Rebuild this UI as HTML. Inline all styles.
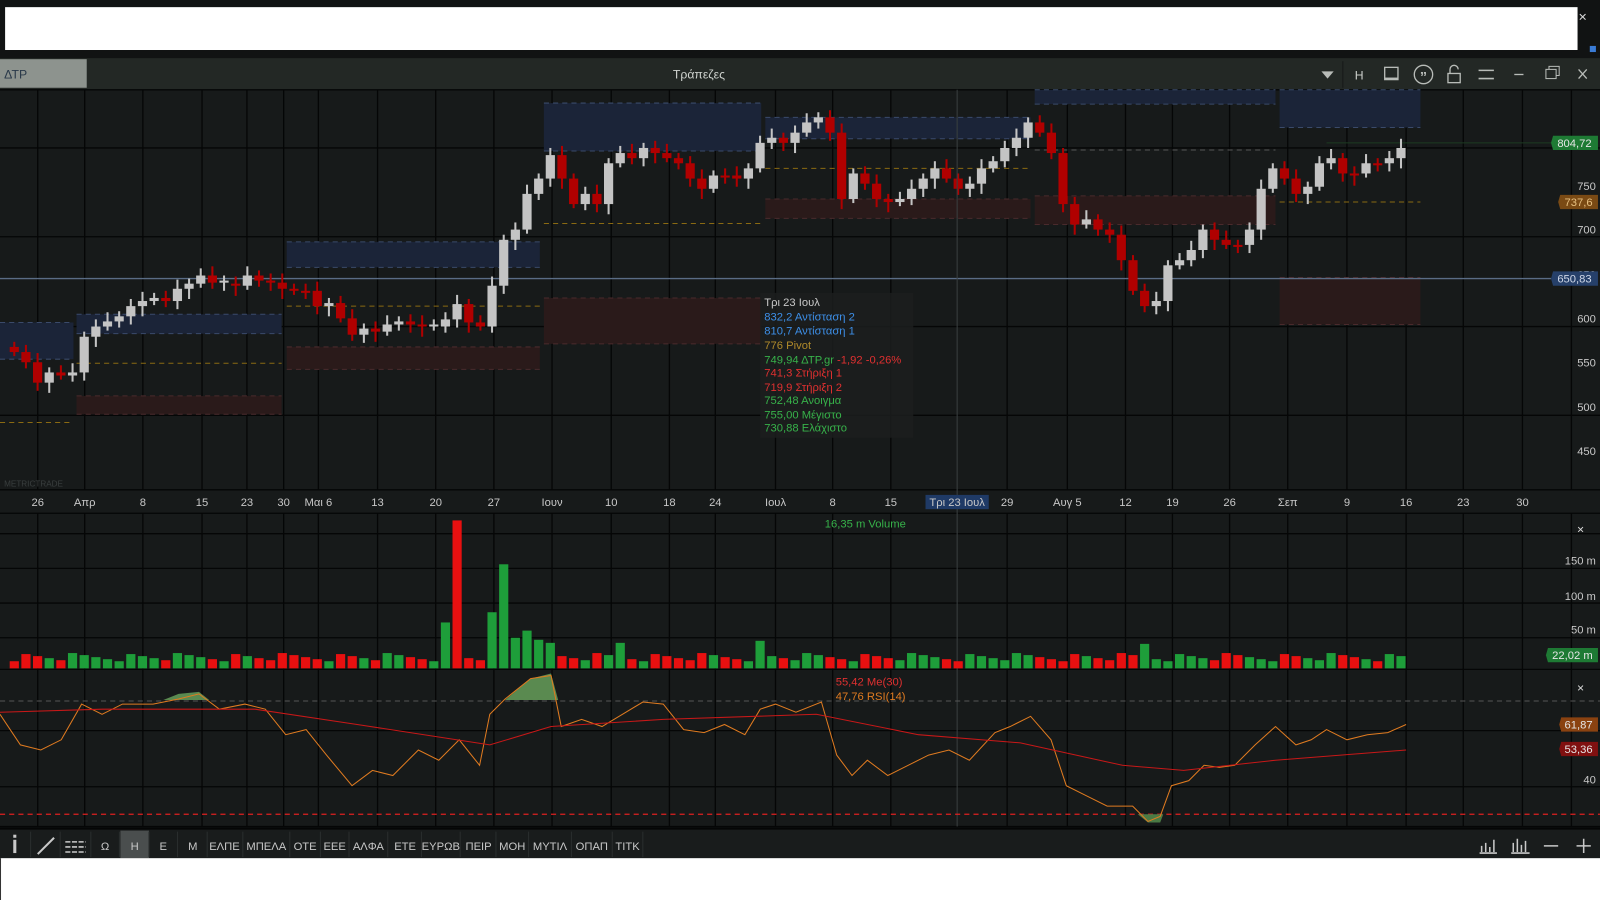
<!DOCTYPE html>
<html><head><meta charset="utf-8">
<style>
html,body{margin:0;padding:0;width:1600px;height:900px;overflow:hidden;background:#171a1a}
svg{display:block}
text{font-family:"Liberation Sans","DejaVu Sans",sans-serif}
</style></head><body>
<svg id="s" width="1600" height="900" viewBox="0 0 1568 882" preserveAspectRatio="none" xmlns="http://www.w3.org/2000/svg">
<rect x="0" y="0" width="1568" height="882" fill="#171a1a"/>
<rect x="0" y="0" width="1568" height="57" fill="#111313"/>
<rect x="5" y="7" width="1541" height="42" fill="#ffffff"/>
<text x="1551" y="21" fill="#ddd" font-size="14" text-anchor="middle">×</text>
<rect x="1558" y="45" width="6" height="6" fill="#3a7bd5"/>
<rect x="0" y="57" width="1568" height="31" fill="#232825"/>
<rect x="0" y="58" width="85" height="28" fill="#8d938e"/>
<text x="4" y="77" fill="#2a3a4a" font-size="12">ΔΤΡ</text>
<text x="685" y="77" fill="#d0d4d0" font-size="12" text-anchor="middle">Τράπεζες</text>
<line x1="1316" y1="60" x2="1316" y2="86" stroke="#151818"/>
<path d="M1295 70 L1307 70 L1301 77 Z" fill="#b8bcb8"/>
<text x="1332" y="78" fill="#c8ccc8" font-size="12" text-anchor="middle">H</text>
<rect x="1357" y="66" width="13" height="12" fill="none" stroke="#b8bcb8" stroke-width="1.3"/>
<rect x="1357" y="76" width="13" height="2" fill="#b8bcb8"/>
<circle cx="1395" cy="73" r="9" fill="none" stroke="#b8bcb8" stroke-width="1.3"/>
<text x="1395" y="80" fill="#b8bcb8" font-size="14" font-weight="bold" text-anchor="middle">”</text>
<rect x="1419" y="72" width="12" height="9" fill="none" stroke="#b8bcb8" stroke-width="1.3"/>
<path d="M1421 72 V68 A4 4 0 0 1 1429 68" fill="none" stroke="#b8bcb8" stroke-width="1.3"/>
<path d="M1449 69 H1464 M1449 77 H1464" stroke="#b8bcb8" stroke-width="1.5"/>
<path d="M1484 73 H1493" stroke="#b8bcb8" stroke-width="1.3"/>
<rect x="1515" y="68" width="10" height="9" fill="none" stroke="#b8bcb8"/>
<path d="M1518 68 V65 H1528 V74 H1525" fill="none" stroke="#b8bcb8"/>
<path d="M1547 68 L1555 77 M1555 68 L1547 77" stroke="#b8bcb8" stroke-width="1.3"/>
<g id="grid" stroke="#050606" stroke-width="1.3"></g>
<g id="zones"></g>
<line x1="0" y1="273" x2="1520" y2="273" stroke="#5a6c85" stroke-width="1.3"/>
<line x1="1300" y1="140" x2="1520" y2="140" stroke="#1d3a22" stroke-width="1"/>
<g id="candles"></g>
<line x1="938" y1="88" x2="938" y2="810" stroke="#3a3f40" stroke-width="1"/>
<rect x="745" y="287" width="150" height="142" fill="#1c1f1f" opacity="0.85"/>
<g font-size="11">
<text x="749" y="300" fill="#c8c8c8">Τρι 23 Ιουλ</text>
<text x="749" y="314" fill="#3d8fe8">832,2 Αντίσταση 2</text>
<text x="749" y="328" fill="#3d8fe8">810,7 Αντίσταση 1</text>
<text x="749" y="342" fill="#b08a2a">776 Pivot</text>
<text x="749" y="356" fill="#37b24a">749,94 ΔΤΡ.gr <tspan fill="#e03030">-1,92 -0,26%</tspan></text>
<text x="749" y="369" fill="#e03030">741,3 Στήριξη 1</text>
<text x="749" y="383" fill="#e03030">719,9 Στήριξη 2</text>
<text x="749" y="396" fill="#37b24a">752,48 Ανοιγμα</text>
<text x="749" y="410" fill="#37b24a">755,00 Μέγιστο</text>
<text x="749" y="423" fill="#37b24a">730,88 Ελάχιστο</text>
</g>
<text x="4" y="477" fill="#3a3f3f" font-size="8">METRICTRADE</text>
<g font-size="11" fill="#c8c8c8" text-anchor="end">
<text x="1564" y="186">750</text><text x="1564" y="229">700</text><text x="1564" y="273">650</text>
<text x="1564" y="316">600</text><text x="1564" y="359">550</text><text x="1564" y="403">500</text><text x="1564" y="446">450</text>
<text x="1564" y="553">150 m</text><text x="1564" y="588">100 m</text><text x="1564" y="621">50 m</text>
<text x="1564" y="768">40</text>
</g>
<g font-size="11" text-anchor="middle">
<path d="M1522 133 H1566 V147 H1522 L1520 140Z" fill="#1e7a34"/><text x="1543" y="144" fill="#e6e6e6">804,72</text>
<path d="M1529 191 H1566 V205 H1529 L1527 198Z" fill="#7a4a14"/><text x="1547" y="202" fill="#e6c080">737,6</text>
<path d="M1522 266 H1566 V280 H1522 L1520 273Z" fill="#26406a"/><text x="1543" y="277" fill="#d0d8e8">650,83</text>
<path d="M1517 635 H1566 V649 H1517 L1515 642Z" fill="#1e7a34"/><text x="1541" y="646" fill="#e6e6e6">22,02 m</text>
<path d="M1530 703 H1566 V717 H1530 L1528 710Z" fill="#8a4210"/><text x="1547" y="714" fill="#e6e6e6">61,87</text>
<path d="M1530 727 H1566 V741 H1530 L1528 734Z" fill="#801010"/><text x="1547" y="738" fill="#e6e6e6">53,36</text>
</g>
<text x="1549" y="523" fill="#ddd" font-size="12" text-anchor="middle">×</text>
<text x="1549" y="678" fill="#ddd" font-size="12" text-anchor="middle">×</text>
<rect x="907" y="485" width="62" height="14" fill="#1f3a66"/>
<g id="dates" font-size="11" fill="#c8c8c8" text-anchor="middle"></g>
<text x="848" y="517" fill="#37b24a" font-size="11" text-anchor="middle">16,35 m Volume</text>
<g id="vol"></g>
<line x1="0" y1="687" x2="1568" y2="687" stroke="#555" stroke-dasharray="5,4"/>
<line x1="0" y1="798" x2="1568" y2="798" stroke="#e02020" stroke-dasharray="5,4" stroke-width="1.2"/>
<path d="M160 686 L175 680 L195 678 L205 686 Z M495 686 L520 665 L540 660 L547 686 Z" fill="#5a8a50"/>
<path d="M1115 798 L1125 806 L1137 806 L1140 798 Z" fill="#4a7a44"/>
<polyline id="rsi" fill="none" stroke="#e07b20" stroke-width="1"/>
<polyline id="ma" fill="none" stroke="#c81818" stroke-width="1"/>
<text x="819" y="672" fill="#e03030" font-size="11">55,42 Me(30)</text>
<text x="819" y="686" fill="#e07b20" font-size="11">47,76 RSI(14)</text>
<rect x="0" y="812" width="1568" height="29" fill="#191c1c"/>
<line x1="0" y1="812" x2="1568" y2="812" stroke="#050606" stroke-width="2"/>
<rect x="118" y="814" width="28" height="27" fill="#4a4e4e"/>
<g id="tb" font-size="11" fill="#c8c8c8" text-anchor="middle"></g>
<rect x="13" y="823" width="3" height="13" fill="#c8c8c8"/><rect x="13" y="818" width="3" height="3" fill="#c8c8c8"/>
<line x1="37" y1="837" x2="53" y2="821" stroke="#c8c8c8" stroke-width="2"/>
<path d="M64 825 H84 M64 830 H84 M64 835 H84" stroke="#c8c8c8" stroke-width="1.5" stroke-dasharray="5,1.5"/>
<path d="M1450 836 H1467 M1452 835 V829 M1456 835 V826 M1460 835 V830 M1464 835 V823" stroke="#c8c8c8" stroke-width="1.5"/>
<path d="M1481 836 H1499 M1483 835 V826 M1487 835 V822 M1491 835 V828 M1495 835 V824" stroke="#c8c8c8" stroke-width="1.5"/>
<path d="M1513 829 H1527 M1545 829 H1559 M1552 822 V836" stroke="#c8c8c8" stroke-width="1.5"/>
<rect x="0" y="841" width="1568" height="41" fill="#ffffff"/>
<rect x="0" y="841" width="1" height="41" fill="#333"/>
</svg>
<script>
var NS="http://www.w3.org/2000/svg";
function el(p,t,a){var e=document.createElementNS(NS,t);for(var k in a)e.setAttribute(k,a[k]);p.appendChild(e);return e;}
var g=document.getElementById('grid');
var vx=[37,83,140,198,242,278,312,370,427,484,541,599,656,701,760,816,873,987,1046,1103,1149,1205,1262,1320,1378,1434,1492,1540];
vx.forEach(function(x){el(g,'line',{x1:x,y1:88,x2:x,y2:480});el(g,'line',{x1:x,y1:503,x2:x,y2:810});});
[88,145,232,320,407,480,503,523,557,591,625,656,716,771,810].forEach(function(y){el(g,'line',{x1:0,y1:y,x2:1568,y2:y});});
var z=document.getElementById('zones');
function zone(x1,y1,x2,y2,f,s){el(z,'rect',{x:x1,y:y1,width:x2-x1,height:y2-y1,fill:f});el(z,'line',{x1:x1,y1:y1,x2:x2,y2:y1,stroke:s,'stroke-dasharray':'5,4'});el(z,'line',{x1:x1,y1:y2,x2:x2,y2:y2,stroke:s,'stroke-dasharray':'5,4'});}
var B='#1b2438',BS='#3a4a6a',R='#2a1a1a',RS='#4a2a2c';
[[0,316,72,352],[75,308,276,327],[281,237,529,262],[533,101,746,148],[750,115,1010,136],[1014,88,1250,102],[1254,88,1392,125]].forEach(function(a){zone(a[0],a[1],a[2],a[3],B,BS)});
[[75,388,276,406],[281,340,529,362],[533,292,746,337],[750,195,1010,214],[1014,192,1250,220],[1254,272,1392,318]].forEach(function(a){zone(a[0],a[1],a[2],a[3],R,RS)});
[[0,414,70],[75,356,276],[281,300,529],[533,219,746],[750,165,1010],[1254,198,1392]].forEach(function(a){el(z,'line',{x1:a[0],y1:a[1],x2:a[2],y2:a[1],stroke:'#8a6a12','stroke-dasharray':'5,4'})});
el(z,'line',{x1:1014,y1:147,x2:1250,y2:147,stroke:'#555','stroke-dasharray':'5,4'});
var c=[345,355,375,365,368,365,330,320,315,310,300,295,292,295,283,278,270,277,278,280,270,275,277,283,285,285,300,297,312,328,322,325,318,315,318,320,320,313,298,316,320,280,235,225,190,175,152,175,200,190,200,160,150,155,145,150,155,160,175,185,172,172,175,165,140,135,140,130,120,115,130,195,170,180,195,198,195,185,175,165,175,185,180,165,158,145,135,120,130,150,200,220,215,225,230,255,285,300,295,260,255,245,225,235,240,240,225,185,165,175,190,183,160,155,170,170,160,160,155,145];
var cg=document.getElementById('candles'),vg=document.getElementById('vol');
var spec={37:45,38:145,41:55,42:102,43:30,44:37,45:28,46:25,52:25,64:27,97:24};
var prev=340;
for(var i=0;i<c.length;i++){
 var x=14+i*11.42,o=prev,cl=c[i];
 if(Math.abs(o-cl)<2)cl=o+((i%2)?2:-2);
 var up=cl<o,col=up?'#c4c4c4':'#b00000';
 var t=Math.min(o,cl),b=Math.max(o,cl);
 el(cg,'line',{x1:x,y1:t-5-(i%3)*2,x2:x,y2:b+4+(i%4)*2,stroke:col,'stroke-width':2});
 el(cg,'rect',{x:x-4.5,y:t,width:9,height:b-t,fill:col});
 var h=spec[i]||(7+((i*7)%9));
 var vc=(i==38)?'#e81010':(up||spec[i]?'#1e9e3a':'#e81010');
 el(vg,'rect',{x:x-4.5,y:655-h,width:9,height:h,fill:vc});
 prev=c[i];
}
var d=document.getElementById('dates');
[[37,'26'],[83,'Απρ'],[140,'8'],[198,'15'],[242,'23'],[278,'30'],[312,'Μαι 6'],[370,'13'],[427,'20'],[484,'27'],[541,'Ιουν'],[599,'10'],[656,'18'],[701,'24'],[760,'Ιουλ'],[816,'8'],[873,'15'],[938,'Τρι 23 Ιουλ'],[987,'29'],[1046,'Αυγ 5'],[1103,'12'],[1149,'19'],[1205,'26'],[1262,'Σεπ'],[1320,'9'],[1378,'16'],[1434,'23'],[1492,'30']].forEach(function(a){var t=el(d,'text',{x:a[0],y:496});t.textContent=a[1];});
var rsi=[[0,700],[20,730],[40,735],[60,725],[80,690],[100,700],[120,690],[150,690],[175,685],[195,680],[215,695],[240,690],[260,695],[280,720],[300,715],[320,740],[345,770],[365,755],[385,760],[410,735],[430,745],[450,725],[470,750],[480,700],[495,685],[520,665],[540,662],[550,712],[570,705],[590,712],[610,700],[630,688],[650,690],[670,715],[690,718],[710,710],[730,720],[745,695],[760,690],[780,698],[805,688],[820,740],[835,760],[850,745],[870,760],[890,750],[910,740],[930,735],[950,745],[975,718],[990,712],[1010,702],[1030,725],[1045,770],[1065,780],[1085,790],[1110,790],[1125,805],[1137,800],[1148,770],[1165,765],[1180,750],[1195,752],[1210,750],[1230,730],[1250,712],[1270,730],[1285,725],[1300,715],[1320,725],[1340,720],[1360,718],[1378,710]];
document.getElementById('rsi').setAttribute('points',rsi.map(function(p){return p.join(',')}).join(' '));
var ma=[[0,698],[100,695],[250,695],[350,710],[480,730],[540,712],[650,705],[800,700],[900,720],[1000,728],[1100,750],[1160,755],[1250,745],[1378,735]];
document.getElementById('ma').setAttribute('points',ma.map(function(p){return p.join(',')}).join(' '));
var tb=document.getElementById('tb');
[[103,'Ω'],[132,'Η'],[160,'Ε'],[189,'Μ'],[220,'ΕΛΠΕ'],[261,'ΜΠΕΛΑ'],[299,'ΟΤΕ'],[328,'ΕΕΕ'],[361,'ΑΛΦΑ'],[397,'ΕΤΕ'],[432,'ΕΥΡΩΒ'],[469,'ΠΕΙΡ'],[502,'ΜΟΗ'],[539,'ΜΥΤΙΛ'],[580,'ΟΠΑΠ'],[615,'ΤΙΤΚ']].forEach(function(a){var t=el(tb,'text',{x:a[0],y:833});t.textContent=a[1];});
[30,59,89,117,146,174,203,238,284,314,342,380,413,451,486,518,560,600,630].forEach(function(x){el(tb,'line',{x1:x,y1:815,x2:x,y2:840,stroke:'#2a2e2e'});});
</script>
</body></html>
